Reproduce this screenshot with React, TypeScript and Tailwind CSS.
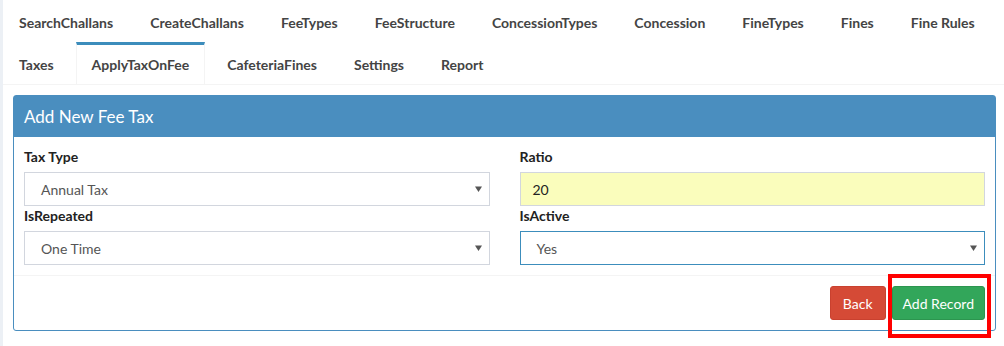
const tabs = [
  "SearchChallans",
  "CreateChallans",
  "FeeTypes",
  "FeeStructure",
  "ConcessionTypes",
  "Concession",
  "FineTypes",
  "Fines",
  "Fine Rules",
  "Taxes",
  "ApplyTaxOnFee",
  "CafeteriaFines",
  "Settings",
  "Report",
]

const active = "ApplyTaxOnFee"

function FakeSelect({ value, focused }: { value: string; focused?: boolean }) {
  return (
    <div
      className={`flex h-[34px] items-center justify-between border pl-[16px] pr-[7px] text-[14px] text-[#555] ${
        focused ? "border-[#3c8dbc]" : "border-[#d2d6de]"
      }`}
    >
      <span>{value}</span>
      <svg width="7" height="6" viewBox="0 0 7 6">
        <path d="M0 0.5 H7 L3.5 6 Z" fill="#555" />
      </svg>
    </div>
  )
}

function Field({ label, children }: { label: string; children: React.ReactNode }) {
  return (
    <div>
      <div className="mb-[5px] text-[14px] leading-5 font-bold text-[#222]">{label}</div>
      {children}
    </div>
  )
}

export default function App() {
  return (
    <div
      className="min-h-[346px] border-l-[3px] border-[#ecf0f5] bg-white"
      style={{ fontFamily: "Lato, 'Noto Sans', sans-serif" }}
    >
      <ul className="flex flex-wrap border-b border-[#f4f4f4] pl-px">
        {tabs.map((t) => (
          <li
            key={t}
            className={`mr-[7px] flex h-[42px] items-center border-t-[3px] px-[15px] text-[14px] font-bold text-[#444] ${
              t === active
                ? "border-x border-t-[#3c8dbc] border-x-[#f4f4f4] bg-white"
                : "border-t-transparent"
            }`}
          >
            {t}
          </li>
        ))}
      </ul>

      <div className="pt-[10px] pr-[8px] pl-[10px]">
        <div className="rounded-[3px] border border-[#4a8ebf]">
          <div className="flex h-[41px] items-center bg-[#4a8ebf] px-[10px] text-[17px] text-white">
            Add New Fee Tax
          </div>
          <div className="grid grid-cols-2 gap-x-[30px] px-[10px] pt-[10px] pb-[10px]">
            <Field label="Tax Type">
              <FakeSelect value="Annual Tax" />
            </Field>
            <Field label="Ratio">
              <div className="flex h-[34px] items-center border border-[#d2d6de] bg-[#fafdbc] px-[12px] text-[14px] text-[#222]">
                20
              </div>
            </Field>
            <Field label="IsRepeated">
              <FakeSelect value="One Time" />
            </Field>
            <Field label="IsActive">
              <FakeSelect value="Yes" focused />
            </Field>
          </div>
          <div className="flex justify-end gap-[6px] border-t border-[#f4f4f4] p-[10px]">
            <button className="h-[34px] rounded-[3px] border border-[#c9412f] bg-[#d54a36] px-[12px] text-[14px] text-white">
              Back
            </button>
            <div className="relative">
              <button className="h-[34px] rounded-[3px] border border-[#2c954f] bg-[#32a65a] px-[10px] text-[14px] text-white">
                Add Record
              </button>
              <div className="pointer-events-none absolute -top-[12px] -right-[6px] -bottom-[18px] -left-[4px] border-[4px] border-[#ff0000]" />
            </div>
          </div>
        </div>
      </div>
    </div>
  )
}
